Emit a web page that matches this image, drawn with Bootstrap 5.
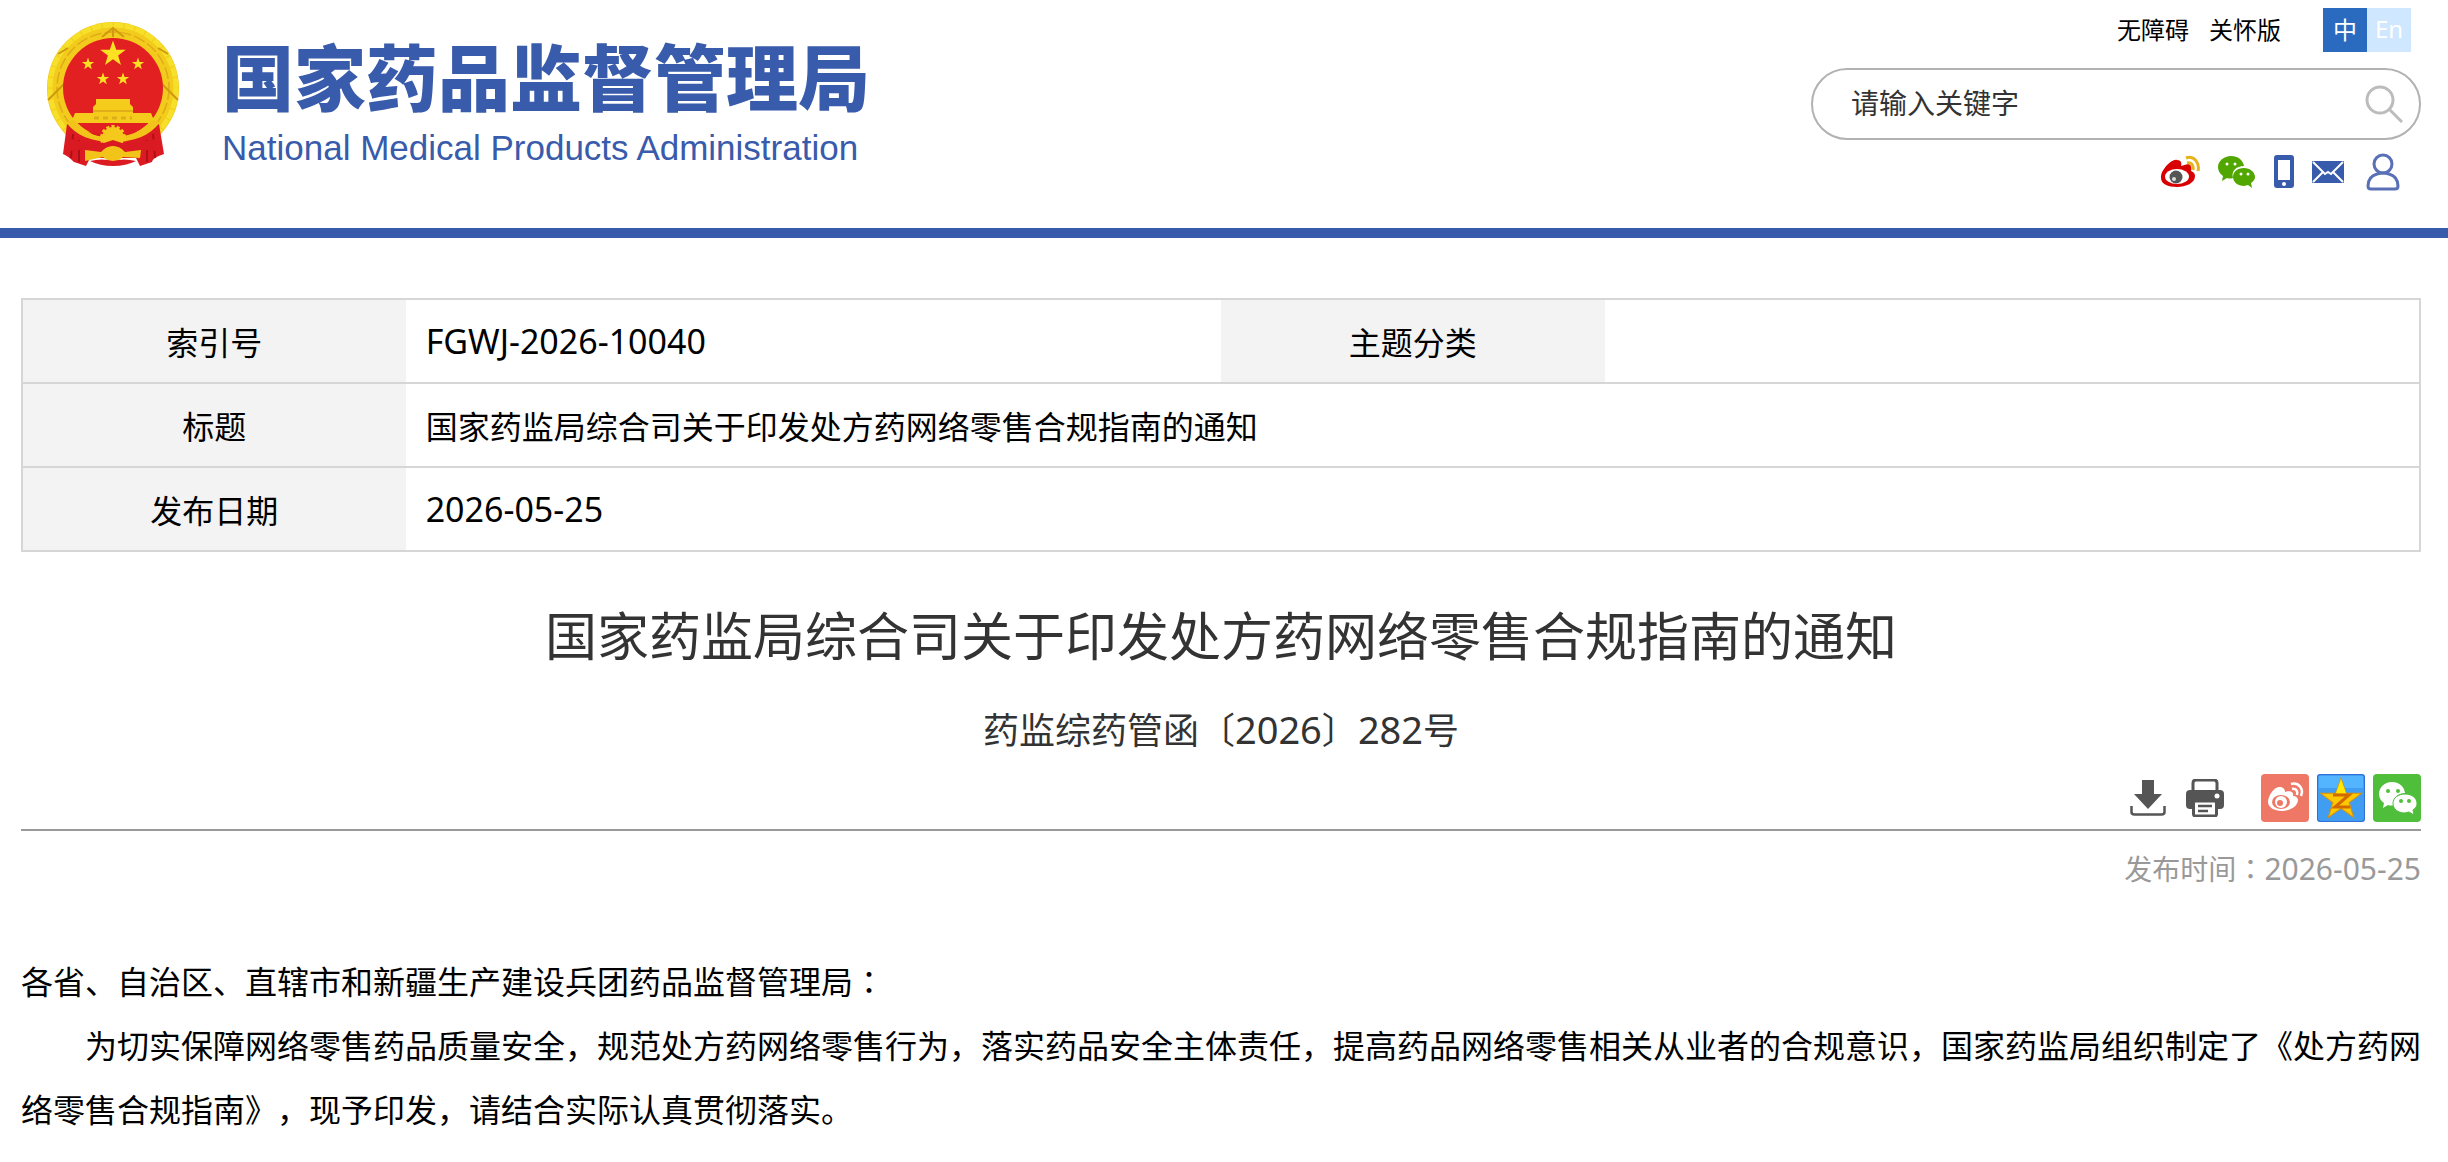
<!DOCTYPE html>
<html lang="zh-CN">
<head>
<meta charset="utf-8">
<meta name="viewport" content="width=device-width, initial-scale=1">
<title>国家药监局综合司关于印发处方药网络零售合规指南的通知</title>
<link href="https://cdn.jsdelivr.net/npm/bootstrap@5.3.0/dist/css/bootstrap.min.css" rel="stylesheet">
<style>
  :root { --brand: #385bab; --rule: #d6d6d6; }
  body { font-family: "Noto Sans CJK SC", "Noto Sans", sans-serif; font-size: 32px; line-height: 64px; color: #000; background: #fff; text-spacing-trim: space-all; }
  a { text-decoration: none; }
  svg { display: block; flex: none; }
  .latin { font-family: "Noto Sans", "Noto Sans CJK SC", sans-serif; font-size: 34px; }
  .mid-colon { font-family: "Noto Sans CJK JP", sans-serif; }
  .page-pad { padding-left: 21px; padding-right: 27px; }

  .masthead { border-bottom: 10px solid var(--brand); height: 238px; }
  .brand-link { color: var(--brand); gap: 42px; padding: 20px 0 0 25px; }
  .brand-text { padding-top: 18px; gap: 18px; }
  .brand-zh { font-size: 72px; line-height: 72px; font-weight: 900; }
  .brand-en { font-family: "Liberation Sans", Arial, sans-serif; font-size: 35px; line-height: 40px; }
  .tools { width: 610px; }
  .top-links { font-size: 24px; line-height: 42px; padding: 8px 10px 0 0; gap: 20px; }
  .top-links a { color: #000; }
  .lang-switch { margin-left: 22px; }
  .lang-switch a { width: 44px; height: 44px; text-align: center; color: #fff; background: #2b6bbf; }
  .lang-switch a + a { background: #cfe7ff; font-family: "Noto Sans", sans-serif; }
  .search-box { height: 72px; margin-top: 16px; border: 2px solid #b2b2b2; border-radius: 36px; padding: 0 16px 4px 38px; }
  .search-box input { border: 0; outline: 0; background: none; font-size: 28px; line-height: 40px; color: #333; min-width: 0; padding: 0; }
  .search-box input::placeholder { color: #333; opacity: 1; }
  .search-box button { border: 0; background: none; padding: 4px 0 0; }
  .quick-links { padding: 13px 21px 0 0; gap: 18px; }

  .meta-table { margin-top: 60px; border: 2px solid var(--rule); table-layout: fixed; width: 100%; border-collapse: collapse; }
  .meta-table tr { border-top: 2px solid var(--rule); height: 84px; }
  .meta-table th { background: #f3f3f3; font-weight: 400; text-align: center; }
  .meta-table td { padding: 0 20px; }
  .doc-title { font-size: 52px; line-height: 72px; font-weight: 400; color: #333; margin: 46px 0 0; }
  .doc-number { font-size: 36px; line-height: 56px; color: #333; margin: 30px 0 0; }
  .doc-number .latin { font-size: 38px; }
  .share-bar { border-bottom: 2px solid #999; margin-top: 17px; padding-bottom: 7px; gap: 8px; }
  .page-actions { gap: 20px; margin-right: 29px; }
  .publish-time { font-size: 28px; line-height: 40px; color: #999; margin: 17px 0 0; }
  .publish-time .latin { font-size: 30px; }
  .doc-body { margin-top: 59px; }
  .doc-body p { margin: 0; }
  .doc-body .indented { text-indent: 2em; }
</style>
<script src="https://cdn.jsdelivr.net/npm/bootstrap@5.3.0/dist/js/bootstrap.bundle.min.js"></script>
</head>
<body>
<svg width="0" height="0" class="position-absolute" aria-hidden="true">
  <defs>
    <polygon id="star" points="0,-10 2.4,-3.1 9.5,-3.1 3.8,1.2 5.9,8.1 0,3.9 -5.9,8.1 -3.8,1.2 -9.5,-3.1 -2.4,-3.1"/>
  </defs>
</svg>

<header class="masthead page-pad d-flex justify-content-between align-items-start">
  <a href="#" class="brand-link d-flex">
    <svg width="134" height="146" viewBox="0 0 134 146" aria-hidden="true">
      <path d="M67 2C103 2 133 31 133 68C133 90 124 104 113 116H21C10 104 1 90 1 68C1 31 31 2 67 2Z" fill="#f3cb1c"/>
      <circle cx="67" cy="68" r="63" fill="none" stroke="#f6e02a" stroke-width="5" stroke-dasharray="10 1"/>
      <circle cx="67" cy="68" r="56" fill="none" stroke="#dfab16" stroke-width="1.500" stroke-dasharray="12 3"/>
      <path d="M2 80 L18 64 M132 80 L116 64 M12 34 L22 28 M122 34 L112 28 M56 17 L67 8 L78 17 M67 8V17" stroke="#cf9a10" stroke-width="2" fill="none"/>
      <circle cx="67" cy="68" r="50" fill="#e21f21"/>
      <path d="M21 104C40 118 94 118 113 104L118 134Q106 138 106 142L94 146L90 138H44L40 146L28 142Q22 136 17 134Z" fill="#dc1a22"/>
      <path d="M27 114L25 138M33 120L33 142M107 114L109 138M101 120L101 142" stroke="#ad1019" stroke-width="2"/>
      <path d="M50 79h34v5l3 3v6h18l4 10H25l4-10h18v-6l3-3z" fill="#f5cc1c"/>
      <path d="M47 91h40" stroke="#d8a514" stroke-width="1.500"/>
      <path d="M48 98h38" stroke="#deae18" stroke-width="3" stroke-dasharray="5 4"/>
      <path d="M34 104h66l-12 8-8 2-4-5H58l-4 5-8-2z" fill="#e21f21"/>
      <path d="M20 102C30 116 46 122 67 122S104 116 114 102L106 100C94 112 86 116 67 117S40 112 28 100Z" fill="#f2c41a"/>
      <circle cx="67" cy="118" r="11" fill="#f4c91c" stroke="#f4c91c" stroke-width="4" stroke-dasharray="3 2"/>
      <path d="M22 118Q40 124 58 123L67 120 76 123Q94 124 112 118L110 131Q90 128 77 130L67 126 57 130Q44 128 24 131Z" fill="#d91a22"/>
      <path d="M39 130L55 132Q60 126 67 126Q74 126 79 132L95 130L94 138L77 137Q67 146 57 137L39 141Z" fill="#f2c41a"/>
      <path d="M44 141Q56 138 67 141Q78 138 90 141Q80 146 67 146Q54 146 44 141Z" fill="#dc1a22"/>
      <g fill="#fbe122"><use href="#star" transform="translate(67 34) scale(1.35)"/><use href="#star" transform="translate(42 44) scale(.65)"/><use href="#star" transform="translate(92 44) scale(.65)"/><use href="#star" transform="translate(57 59) scale(.65)"/><use href="#star" transform="translate(77 59) scale(.65)"/></g>
    </svg>
    <span class="brand-text d-flex flex-column">
      <span class="brand-zh">国家药品监督管理局</span>
      <span class="brand-en">National Medical Products Administration</span>
    </span>
  </a>

  <div class="tools">
    <nav class="top-links d-flex justify-content-end">
      <a href="#">无障碍</a>
      <a href="#">关怀版</a>
      <div class="lang-switch d-flex"><a href="#">中</a><a href="#">En</a></div>
    </nav>
    <form class="search-box d-flex align-items-center">
      <input class="flex-grow-1" type="text" placeholder="请输入关键字" aria-label="请输入关键字">
      <button type="button" aria-label="搜索">
        <svg width="38" height="38" viewBox="0 0 38 38" fill="none" stroke="#bcbcbc" stroke-width="3"><circle cx="15" cy="15" r="13"/><path d="M24 24 L37 37"/></svg>
      </button>
    </form>
    <nav class="quick-links d-flex justify-content-end align-items-center">
      <a href="#" aria-label="微博"><svg width="40" height="34" viewBox="0 0 40 34">
        <path d="M17 5C14 4 8 8 4 14C1 18 1 21 1 23c0 6 7 9 16 9s18-4 18-11c0-3-2-4-4-5 1-3 0-7-3-7l-7 2c1-3 0-6-4-6z" fill="#d80000"/>
        <ellipse cx="17" cy="21.500" rx="12" ry="7.500" fill="#fff"/><circle cx="16" cy="22" r="6.500" fill="#555"/><circle cx="14" cy="24" r="2" fill="#ddd"/>
        <path d="M26 3c8-3 14 5 12 13M27 8c4-1 7 2 6 7" fill="none" stroke="#e6b31c" stroke-width="3"/></svg></a>
      <a href="#" aria-label="微信"><svg width="38" height="34" viewBox="0 0 38 34" fill="#51a600">
        <path d="M13 1C6 1 0 6 0 12c0 4 2 7 5 9l-1 5 5-3q3 1 6 0C13 16 18 11 26 11 25 5 20 1 13 1z"/>
        <path d="M26 13c-7 0-11 4-11 9s5 9 11 9l4-1 4 3-1-5c3-2 4-4 4-6 0-5-5-9-11-9z"/>
        <g fill="#fff"><circle cx="9" cy="9" r="1.500"/><circle cx="17" cy="9" r="1.500"/><circle cx="23" cy="19" r="1.500"/><circle cx="30" cy="19" r="1.500"/></g></svg></a>
      <a href="#" aria-label="手机"><svg width="20" height="34" viewBox="0 0 20 34"><rect width="20" height="33" rx="3" fill="#385bab"/><rect x="4" y="5" width="12" height="20" fill="#fff"/><circle cx="10" cy="29" r="2" fill="#fff"/></svg></a>
      <a href="#" aria-label="邮箱"><svg width="32" height="22" viewBox="0 0 32 22"><rect width="32" height="22" rx="1" fill="#385bab"/><path d="M1 1L13 13L16 11L19 13L31 1M1 21L11 11M31 21L21 11" fill="none" stroke="#fff" stroke-width="2"/></svg></a>
      <a href="#" class="ms-1" aria-label="个人中心"><svg width="34" height="38" viewBox="0 0 34 38" fill="none" stroke="#5a70b6" stroke-width="3"><circle cx="17" cy="11" r="9"/><path d="M11 21C4 23 2 28 2 33q0 3 3 3h24q3 0 3-3c0-5-2-10-9-12q-6-2-12 0z"/></svg></a>
    </nav>
  </div>
</header>

<main class="page-pad">
  <table class="meta-table">
    <colgroup><col style="width:16%"><col style="width:34%"><col style="width:16%"><col style="width:34%"></colgroup>
    <tr><th scope="row">索引号</th><td class="latin">FGWJ-2026-10040</td><th scope="row">主题分类</th><td></td></tr>
    <tr><th scope="row">标题</th><td colspan="3">国家药监局综合司关于印发处方药网络零售合规指南的通知</td></tr>
    <tr><th scope="row">发布日期</th><td colspan="3" class="latin">2026-05-25</td></tr>
  </table>

  <h1 class="doc-title text-center">国家药监局综合司关于印发处方药网络零售合规指南的通知</h1>
  <p class="doc-number text-center">药监综药管函〔<span class="latin">2026</span>〕<span class="latin">282</span>号</p>

  <div class="share-bar d-flex justify-content-end align-items-center">
    <div class="page-actions d-flex align-items-center">
      <a href="#" aria-label="下载"><svg width="36" height="36" viewBox="0 0 36 36" fill="#555"><path d="M12 0h12v14h8L18 29 4 14h8z"/><path d="M1.500 26v6q0 2.500 3 2.500h27q3 0 3-2.500v-6" fill="none" stroke="#555" stroke-width="2.500"/></svg></a>
      <a href="#" aria-label="打印"><svg width="38" height="38" viewBox="0 0 38 38"><path d="M7 12V4q0-3 3-3h18q3 0 3 3v8" fill="none" stroke="#555" stroke-width="3"/><rect y="11" width="38" height="19" rx="4" fill="#555"/><rect x="7.500" y="22" width="23" height="15" rx="2" fill="#fff" stroke="#555" stroke-width="3"/><path d="M12 27h14M12 32h10" stroke="#555" stroke-width="2.500"/><circle cx="31" cy="17" r="2.500" fill="#fff"/></svg></a>
    </div>
    <a href="#" aria-label="分享到微博"><svg width="48" height="48" viewBox="0 0 48 48"><rect width="48" height="48" rx="4" fill="#ee7766"/>
      <path d="M18 13c-5 0-11 9-11 15 0 5 6 9 14 9s16-5 16-11c0-2-2-4-5-4 1-4-2-6-8-4 0-3-2-5-6-5z" fill="#fff"/><ellipse cx="20" cy="28" rx="9" ry="7" fill="#ee7766"/><circle cx="20" cy="28" r="6" fill="#fff"/><circle cx="19" cy="29" r="3" fill="#ee7766"/>
      <path d="M30 10c8-2 13 5 10 12M31 15c4-1 6 2 5 6" fill="none" stroke="#fff" stroke-width="2.500"/></svg></a>
    <a href="#" aria-label="分享到QQ空间"><svg width="48" height="48" viewBox="0 0 48 48"><rect width="48" height="48" rx="3" fill="#2f6fd6"/><rect x="1" y="1" width="46" height="46" rx="3" fill="#419df2"/><path d="M2 2h44v12H2z" fill="#53b4ff"/>
      <use href="#star" transform="translate(24 26) scale(2.150)" fill="#fdc800" stroke="#d8920a" stroke-width=".5"/><path d="M24 5l5 14h-10z" fill="#ffe900"/><path d="M16 21h16L18 33h15" fill="none" stroke="#d26a00" stroke-width="3"/></svg></a>
    <a href="#" aria-label="分享到微信"><svg width="48" height="48" viewBox="0 0 48 48"><rect width="48" height="48" rx="4" fill="#4fbe3a"/>
      <path d="M19 8C11 8 6 14 6 20c0 4 2 7 5 9l-1 5 5-3q3 1 6 0C19 24 25 19 32 19 31 12 26 8 19 8z" fill="#fff"/><path d="M32 20c-7 0-12 4-12 9.500S25 39 32 39l4-1 5 3-1-5c3-2 4-4 4-6.500C44 24 39 20 32 20z" fill="#fff" stroke="#4fbe3a"/>
      <g fill="#4fbe3a"><circle cx="15" cy="17" r="2"/><circle cx="25" cy="17" r="2"/><circle cx="28" cy="27" r="2"/><circle cx="36" cy="27" r="2"/></g></svg></a>
  </div>
  <p class="publish-time text-end">发布时间<span class="mid-colon" lang="ja">：</span><span class="latin">2026-05-25</span></p>

  <article class="doc-body">
    <p>各省、自治区、直辖市和新疆生产建设兵团药品监督管理局<span class="mid-colon" lang="ja">：</span></p>
    <p class="indented">为切实保障网络零售药品质量安全，规范处方药网络零售行为，落实药品安全主体责任，提高药品网络零售相关从业者的合规意识，国家药监局组织制定了《处方药网络零售合规指南》，现予印发，请结合实际认真贯彻落实。</p>
  </article>
</main>
</body>
</html>
